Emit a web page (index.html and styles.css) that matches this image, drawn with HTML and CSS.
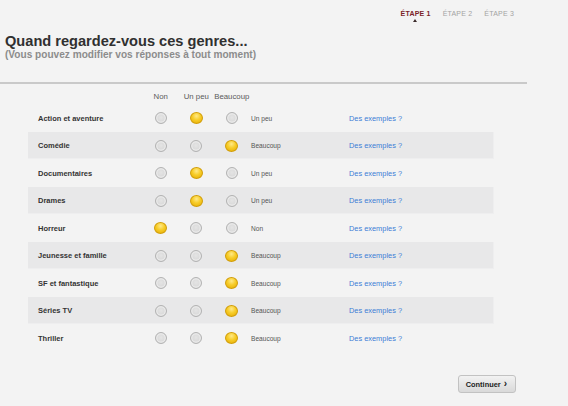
FILE: index.html
```html
<!DOCTYPE html>
<html lang="fr">
<head>
<meta charset="utf-8">
<title>Genres</title>
<link rel="stylesheet" href="styles.css">
</head>
<body>
<div class="page">
  <nav class="steps">
    <span class="step active">ÉTAPE 1</span>
    <span class="step">ÉTAPE 2</span>
    <span class="step">ÉTAPE 3</span>
  </nav>
  <header class="intro">
    <h1 class="title">Quand regardez-vous ces genres...</h1>
    <p class="subtitle">(Vous pouvez modifier vos réponses à tout moment)</p>
  </header>
  <div class="rule"></div>
  <div class="grid">
    <div class="row head">
      <span class="label"></span>
      <span class="col">Non</span>
      <span class="col">Un peu</span>
      <span class="col">Beaucoup</span>
    </div>
    <div class="row">
      <span class="label">Action et aventure</span>
      <span class="col"><i class="radio"></i></span>
      <span class="col"><i class="radio on"></i></span>
      <span class="col"><i class="radio"></i></span>
      <span class="status">Un peu</span>
      <a class="link" href="#">Des exemples ?</a>
    </div>
    <div class="row alt">
      <span class="label">Comédie</span>
      <span class="col"><i class="radio"></i></span>
      <span class="col"><i class="radio"></i></span>
      <span class="col"><i class="radio on"></i></span>
      <span class="status">Beaucoup</span>
      <a class="link" href="#">Des exemples ?</a>
    </div>
    <div class="row">
      <span class="label">Documentaires</span>
      <span class="col"><i class="radio"></i></span>
      <span class="col"><i class="radio on"></i></span>
      <span class="col"><i class="radio"></i></span>
      <span class="status">Un peu</span>
      <a class="link" href="#">Des exemples ?</a>
    </div>
    <div class="row alt">
      <span class="label">Drames</span>
      <span class="col"><i class="radio"></i></span>
      <span class="col"><i class="radio on"></i></span>
      <span class="col"><i class="radio"></i></span>
      <span class="status">Un peu</span>
      <a class="link" href="#">Des exemples ?</a>
    </div>
    <div class="row">
      <span class="label">Horreur</span>
      <span class="col"><i class="radio on"></i></span>
      <span class="col"><i class="radio"></i></span>
      <span class="col"><i class="radio"></i></span>
      <span class="status">Non</span>
      <a class="link" href="#">Des exemples ?</a>
    </div>
    <div class="row alt">
      <span class="label">Jeunesse et famille</span>
      <span class="col"><i class="radio"></i></span>
      <span class="col"><i class="radio"></i></span>
      <span class="col"><i class="radio on"></i></span>
      <span class="status">Beaucoup</span>
      <a class="link" href="#">Des exemples ?</a>
    </div>
    <div class="row">
      <span class="label">SF et fantastique</span>
      <span class="col"><i class="radio"></i></span>
      <span class="col"><i class="radio"></i></span>
      <span class="col"><i class="radio on"></i></span>
      <span class="status">Beaucoup</span>
      <a class="link" href="#">Des exemples ?</a>
    </div>
    <div class="row alt">
      <span class="label">Séries TV</span>
      <span class="col"><i class="radio"></i></span>
      <span class="col"><i class="radio"></i></span>
      <span class="col"><i class="radio on"></i></span>
      <span class="status">Beaucoup</span>
      <a class="link" href="#">Des exemples ?</a>
    </div>
    <div class="row">
      <span class="label">Thriller</span>
      <span class="col"><i class="radio"></i></span>
      <span class="col"><i class="radio"></i></span>
      <span class="col"><i class="radio on"></i></span>
      <span class="status">Beaucoup</span>
      <a class="link" href="#">Des exemples ?</a>
    </div>
  </div>
  <footer class="footer">
    <button class="continue" type="button">Continuer <span class="chev">&#x203A;</span></button>
  </footer>
</div>
</body>
</html>
```

FILE: styles.css
```css
* { box-sizing: border-box; }

html, body {
  margin: 0;
  padding: 0;
  background: #f3f3f3;
  font-family: "Liberation Sans", Arial, sans-serif;
  color: #333;
}

.page {
  width: 568px;
  height: 406px;
  overflow: hidden;
}

.steps {
  display: flex;
  justify-content: flex-end;
  gap: 12px;
  padding: 9px 54px 0 0;
  height: 18px;
}

.step {
  position: relative;
  font-size: 7px;
  line-height: 9px;
  color: #a3a3a3;
  letter-spacing: 0.2px;
}

.step.active {
  color: #7a2328;
  font-weight: bold;
}

.step.active::after {
  content: "";
  position: absolute;
  left: 50%;
  top: 10px;
  margin-left: -2.5px;
  border-left: 2.5px solid transparent;
  border-right: 2.5px solid transparent;
  border-bottom: 3px solid #3a2a2a;
}

.intro {
  padding: 14.5px 0 0 5px;
}

.title {
  margin: 0;
  font-size: 14.6px;
  line-height: 16px;
  font-weight: bold;
  color: #303030;
}

.subtitle {
  margin: 0;
  font-size: 10.1px;
  line-height: 12px;
  font-weight: bold;
  color: #8c8c8c;
}

.rule {
  margin-top: 21.5px;
  width: 527px;
  height: 2px;
  background: #c9c9c9;
}

.grid {
  margin-left: 28px;
  width: 466px;
}

.row {
  display: flex;
  align-items: center;
  height: 27.5px;
  padding-left: 10px;
}

.row.alt {
  background: #e8e8e9;
  box-shadow: inset -1px -1px 0 #eeeeef;
}

.row.head {
  height: 20.25px;
  align-items: flex-start;
  padding-top: 8px;
  font-size: 7.8px;
  line-height: 9px;
  color: #5a5a5a;
}

.label {
  width: 105px;
  font-size: 7.5px;
  font-weight: bold;
  color: #333;
}

.col {
  width: 35.5px;
  display: flex;
  justify-content: center;
  white-space: nowrap;
}

.radio {
  display: block;
  width: 12px;
  height: 12px;
  border-radius: 50%;
  border: 1px solid #b3b3b3;
  background: radial-gradient(circle at 50% 45%, #e4e4e4 0%, #dadada 55%, #cbcbcb 100%);
  box-shadow: inset 0 0 0 1.5px #e9e9e9;
}

.radio.on {
  width: 13px;
  border-color: #d19d08;
  background: radial-gradient(circle at 50% 30%, #ffe989 0%, #f7cd2a 45%, #e5ab00 100%);
  box-shadow: none;
}

.status {
  margin-left: 1.5px;
  width: 98px;
  font-size: 6.6px;
  color: #555;
}

.link {
  font-size: 7.4px;
  color: #3b7dd6;
  text-decoration: none;
}

.footer {
  display: flex;
  justify-content: flex-end;
  padding: 23.5px 52px 0 0;
}

.continue {
  display: flex;
  align-items: center;
  gap: 3px;
  height: 18px;
  padding: 0 8px 0 7px;
  border: 1px solid #c2c2c2;
  border-radius: 3px;
  background: linear-gradient(#f2f2f2, #d9d9d9);
  font-family: "Liberation Sans", Arial, sans-serif;
  font-size: 7.4px;
  font-weight: bold;
  color: #222;
}

.chev {
  font-size: 10px;
  line-height: 10px;
  font-weight: bold;
}
```
